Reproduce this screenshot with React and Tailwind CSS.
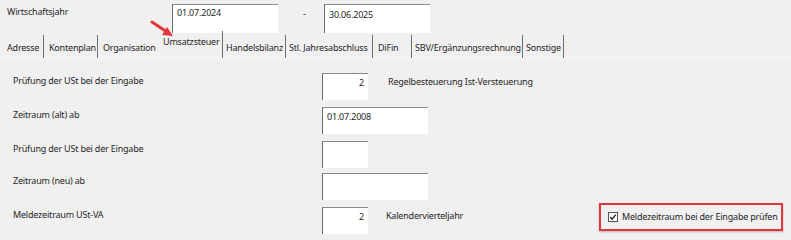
import React from "react"

const font = { fontFamily: '"Noto Sans", "Open Sans", sans-serif' }

const tabs = [
  { label: "Adresse", cls: "w-[44px] pl-[7px] border-r" },
  { label: "Kontenplan", cls: "w-[54px] pl-[5px] border-r" },
  { label: "Organisation", cls: "w-[62px] pl-[5px]" },
  { label: "Umsatzsteuer", cls: "w-[63px] pl-[3px] border-r", active: true },
  { label: "Handelsbilanz", cls: "w-[63px] pl-[3px] border-r" },
  { label: "Stl. Jahresabschluss", cls: "w-[87px] pl-[3px] border-r" },
  { label: "DiFin", cls: "w-[39px] pl-[5px] border-r" },
  { label: "SBV/Ergänzungsrechnung", cls: "w-[111px] pl-[3px] border-r" },
  { label: "Sonstige", cls: "w-[41px] pl-[3px] border-r" },
]

function Field({ value = "", wide, right }) {
  return (
    <div
      className={`h-[27px] bg-white border-t border-l border-t-[#8a8a8a] border-l-[#6a6a6a] pt-[2px] ${
        wide ? "w-[106px]" : "w-[46px]"
      } ${right ? "text-right pr-[4px]" : "pl-[4px]"}`}
    >
      {value}
    </div>
  )
}

function Row({ label, children, h = "h-[34px]" }) {
  return (
    <div className={`flex items-start ${h}`}>
      <div className="w-[322px] pl-[13px] pt-[1px] shrink-0">{label}</div>
      {children}
    </div>
  )
}

export default function App() {
  return (
    <div
      className="relative w-[791px] h-[240px] bg-[#f0f0f0] text-[9px] tracking-[-0.2px] leading-[14px] text-[#262626] overflow-hidden"
      style={font}
    >
      {/* Wirtschaftsjahr */}
      <div className="flex items-start h-[33px] pt-[4px]">
        <div className="w-[172px] pl-[7px] pt-[1px]">Wirtschaftsjahr</div>
        <div className="w-[106px] h-[29px] bg-white border-t border-l border-t-[#8a8a8a] border-l-[#6a6a6a] pl-[4px] pt-[1px]">
          01.07.2024
        </div>
        <div className="w-[46px] pl-[25px] pt-[3px]">-</div>
        <div className="w-[106px] h-[29px] bg-white border-t border-l border-t-[#8a8a8a] border-l-[#6a6a6a] pl-[4px] pt-[3px]">
          30.06.2025
        </div>
      </div>

      {/* Tabs */}
      <div className="flex h-[25px] border-b border-[#f7f7f7]">
        {tabs.map((t) => (
          <div
            key={t.label}
            className={`${t.cls} border-[#6e6e6e] whitespace-nowrap ${
              t.active ? "pt-[4px] -mt-[2px] h-[27px]" : "pt-[6px] mt-[2px] h-[23px]"
            }`}
          >
            {t.label}
          </div>
        ))}
      </div>

      {/* Content */}
      <div className="pt-[15px]">
        <Row label="Prüfung der USt bei der Eingabe">
          <Field value="2" right />
          <div className="pl-[20px] pt-[2px]">Regelbesteuerung Ist-Versteuerung</div>
        </Row>
        <Row label="Zeitraum (alt) ab">
          <Field value="01.07.2008" wide />
        </Row>
        <Row label="Prüfung der USt bei der Eingabe" h="h-[32px]">
          <Field />
        </Row>
        <Row label="Zeitraum (neu) ab">
          <Field wide />
        </Row>
        <Row label="Meldezeitraum USt-VA" h="">
          <Field value="2" right />
          <div className="pl-[18px] pt-[2px]">Kalendervierteljahr</div>
          <div className="ml-auto mr-[8px] -mt-[4px] w-[184px] h-[28px] border-2 border-[#e2353c] shadow-[0_1px_2px_rgba(0,0,0,0.25)] flex items-center pl-[7px]">
            <svg width="10" height="10" viewBox="0 0 10 10" className="shrink-0">
              <rect x="0.5" y="0.5" width="9" height="9" fill="#fff" stroke="#555" />
              <path d="M2.2 5 L4.1 7.2 L7.8 2.6" fill="none" stroke="#222" strokeWidth="1.4" />
            </svg>
            <span className="pl-[4px] whitespace-nowrap">Meldezeitraum bei der Eingabe prüfen</span>
          </div>
        </Row>
      </div>

      {/* annotation arrow */}
      <svg className="absolute left-[145px] top-[15px]" width="35" height="28" viewBox="0 0 35 28">
        <line x1="7" y1="7" x2="22" y2="17" stroke="#e2353c" strokeWidth="3" strokeLinecap="round" />
        <path d="M28 21 L17 20 L22 12 Z" fill="#e2353c" />
      </svg>
    </div>
  )
}
